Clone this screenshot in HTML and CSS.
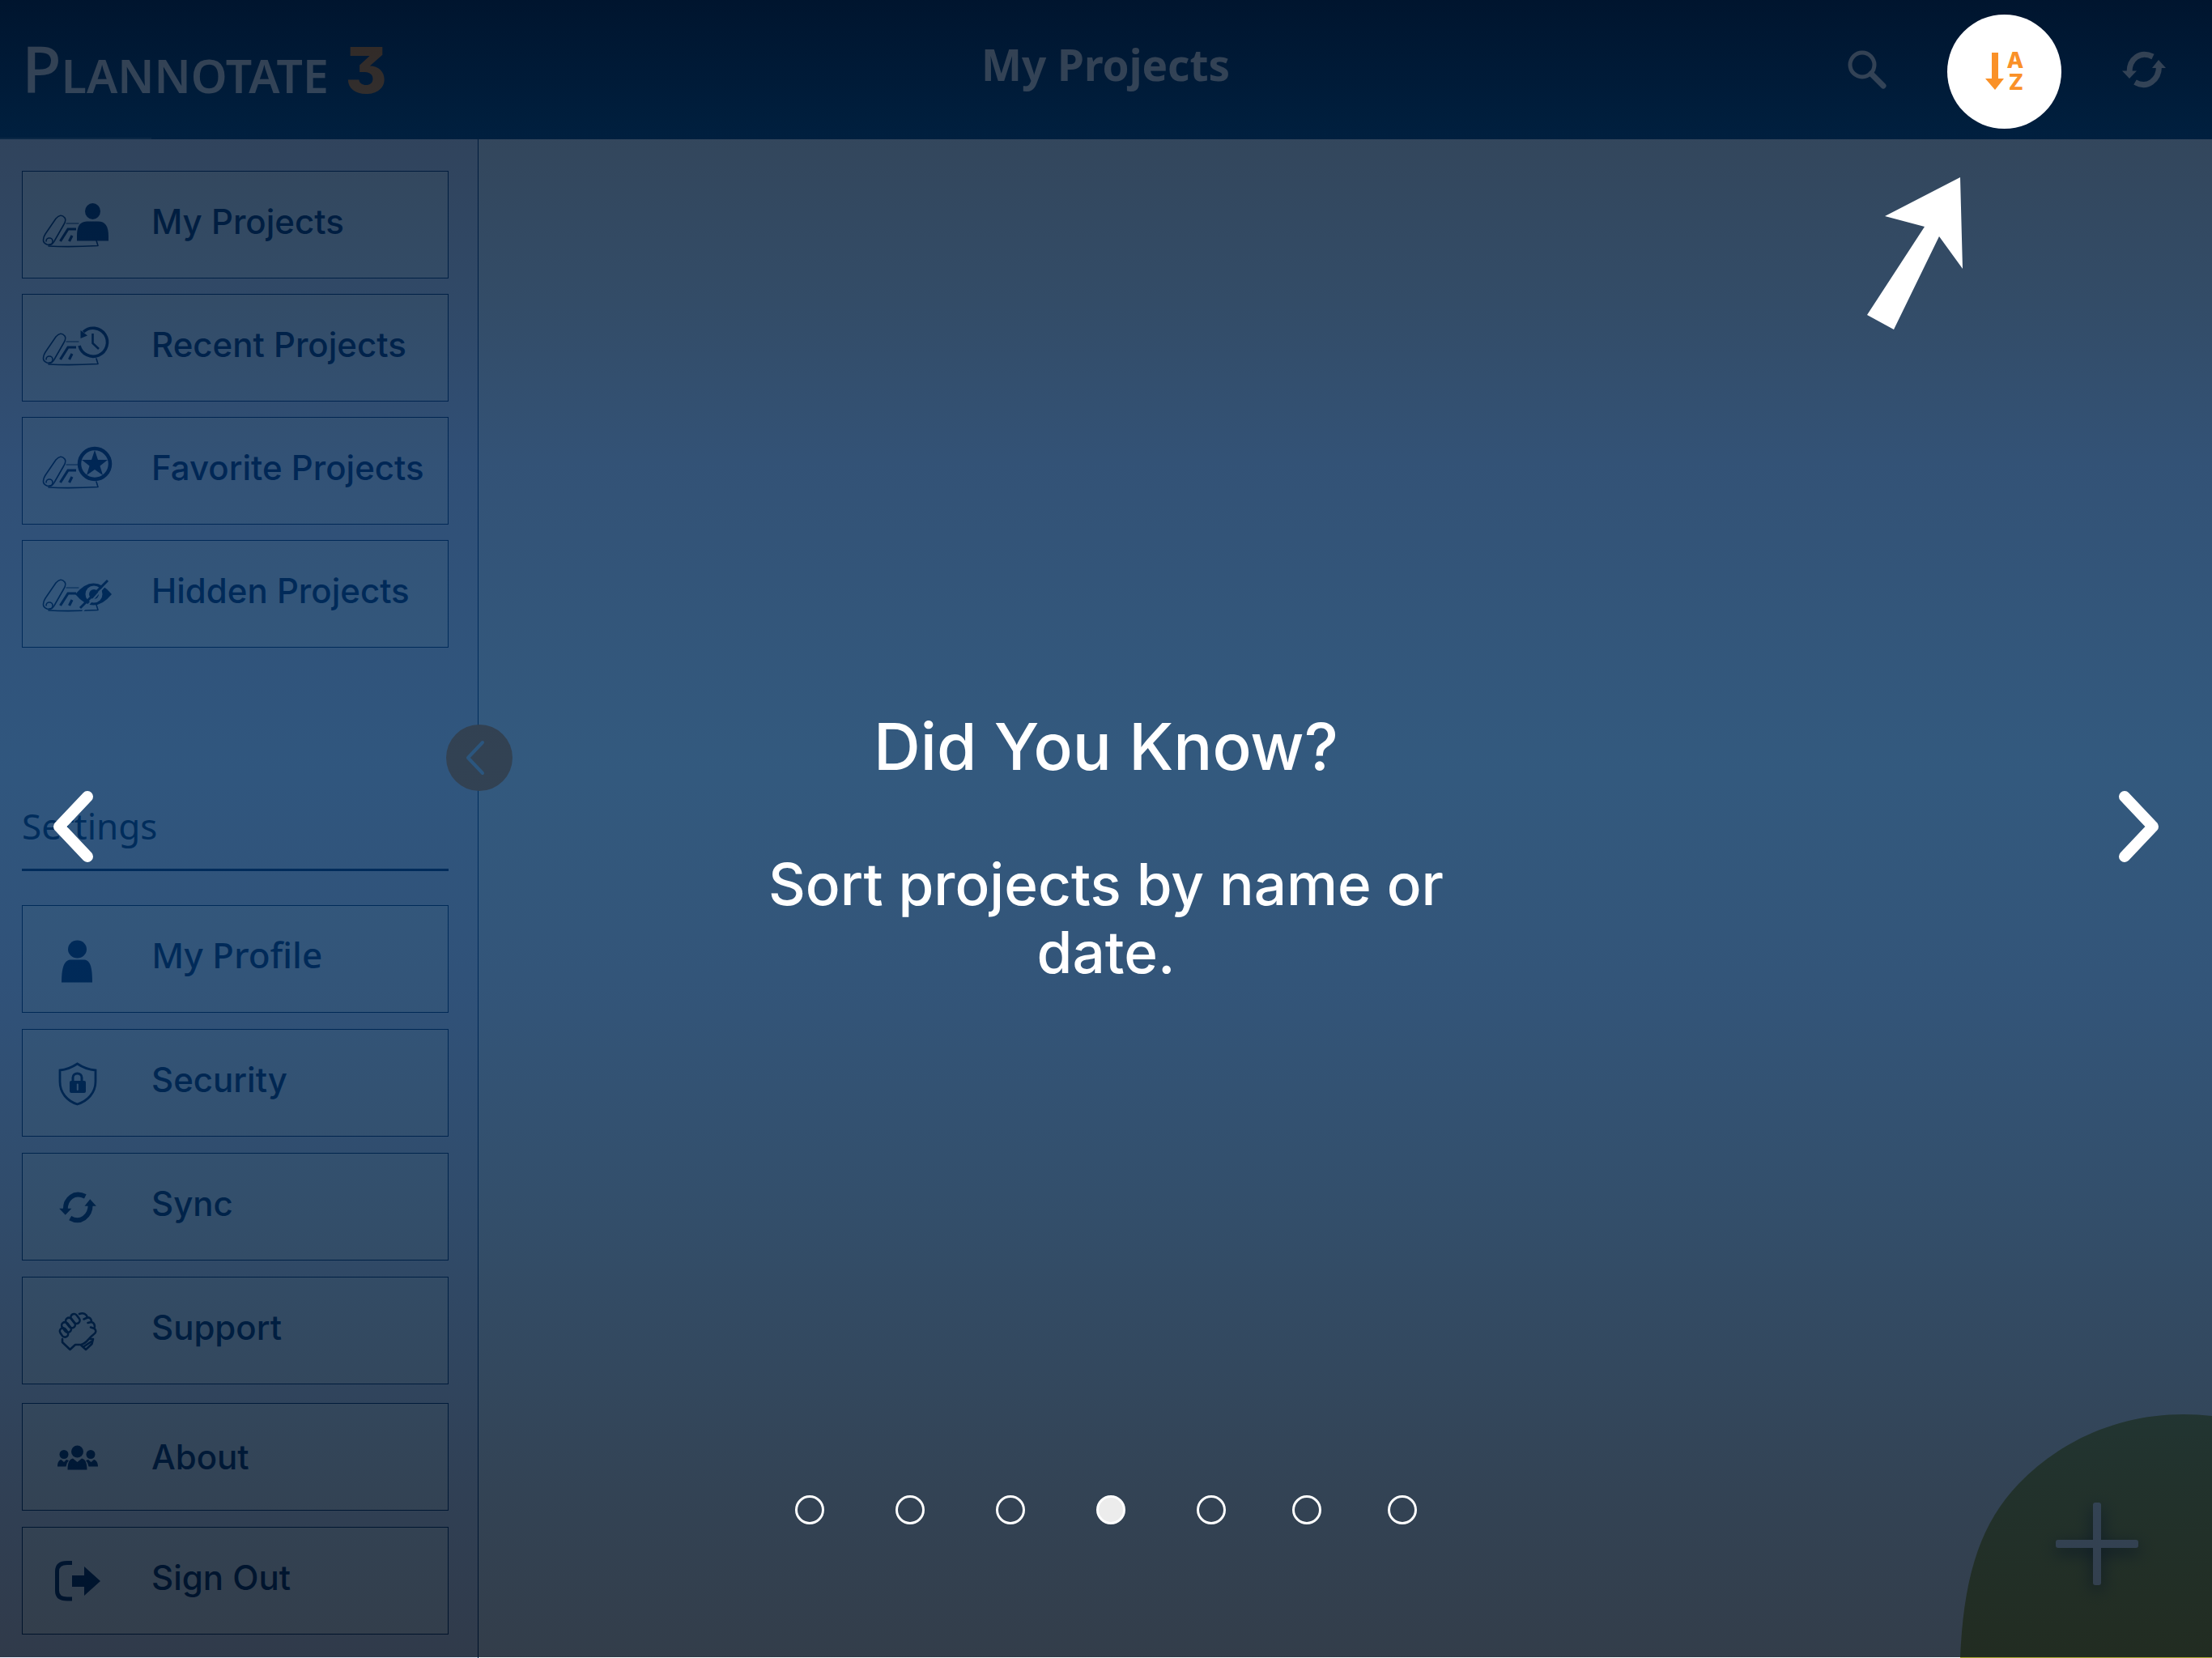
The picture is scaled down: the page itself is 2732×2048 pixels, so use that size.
FILE: index.html
```html
<!DOCTYPE html>
<html lang="en">
<head>
<meta charset="utf-8">
<meta name="viewport" content="width=device-width, initial-scale=1">
<title>Plannotate 3 – My Projects</title>
<link rel="stylesheet" href="styles.css">
</head>
<body>
<svg class="sprite" aria-hidden="true">
  <symbol id="scroll" viewBox="0 0 96 60" overflow="visible">
    <g fill="none" stroke="currentColor" stroke-width="1.6" stroke-linejoin="round" stroke-linecap="round">
      <path d="M6.500 48 Q7 44 9 41 L22 22 Q28 15 33 21 Q35 24 32 29 L20 50 Q17 56 11 54 Q6 52 6.500 48Z"/>
      <path d="M10 50 a4 4 0 1 1 4 4"/>
      <path d="M13 56 Q40 57.500 74 55.500 L72 49"/>
      <path d="M35 28 H50 M31 31 L23 45" stroke-width="1"/>
    </g>
    <path d="M27.500 50 L37 35 H47 M38.500 50 L42 43" fill="none" stroke="currentColor" stroke-width="3.200"/>
  </symbol>
  <symbol id="sync" viewBox="0 0 54 46">
    <g fill="none" stroke="currentColor" stroke-width="7">
      <path d="M9 26 C9 10 22 -1 38 7"/>
      <path d="M45.500 19 C45.500 36 31 47 16 38.500"/>
    </g>
    <path d="M0 24.500 H18 L9 34Z M37 21 H54 L45 11Z" fill="currentColor"/>
  </symbol>
</svg>

<div class="app">
  <header class="topbar">
    <div class="logo">P<span class="logo-small">lannotate</span> <span class="logo-version">3</span></div>
    <h1 class="topbar-title">My Projects</h1>
    <div class="topbar-actions">
      <button class="icon-button" type="button" aria-label="Search">
        <svg width="48" height="48" viewBox="0 0 48 48"><circle cx="18" cy="18" r="15" fill="none" stroke="currentColor" stroke-width="5"/><path d="M29 29 L44 44" stroke="currentColor" stroke-width="7" stroke-linecap="round"/></svg>
      </button>
      <button class="icon-button icon-button--spotlight" type="button" aria-label="Sort projects">
        <svg class="sort-icon" width="48" height="48" viewBox="0 0 48 48" fill="currentColor"><path d="M8 1 H16 V33 H23 L12 47 L0 33 H8Z"/><text class="sort-letter" x="37" y="20" text-anchor="middle">A</text><text class="sort-letter" x="38" y="47" text-anchor="middle">Z</text></svg>
      </button>
      <button class="icon-button" type="button" aria-label="Sync">
        <svg width="54" height="46"><use href="#sync"/></svg>
      </button>
    </div>
  </header>

  <div class="workspace">
    <nav class="sidebar" aria-label="Projects and settings">
      <div class="menu menu--projects">
        <button class="menu-item" type="button">
          <svg class="menu-icon" viewBox="0 0 96 60"><use href="#scroll"/><g fill="currentColor"><ellipse cx="67.500" cy="13" rx="9.500" ry="10"/><path d="M48 49.500 V44 C48 30 52 25.500 62 25.500 H74 C83 25.500 87 31 87 44 V49.500Z"/></g></svg>
          <span class="menu-label">My Projects</span>
        </button>
        <button class="menu-item" type="button">
          <svg class="menu-icon" viewBox="0 0 96 60"><use href="#scroll" y="-6"/><path class="knockout" d="M50 26 A18 18 0 1 0 58 8Z"/><path d="M51 27 A17.500 17.500 0 1 0 56 10" fill="none" stroke="currentColor" stroke-width="3.600"/><path d="M52.500 8 V18 L61 14.500Z" fill="currentColor"/><path d="M67.500 12 V24 L75 31" fill="none" stroke="currentColor" stroke-width="2.600"/></svg>
          <span class="menu-label">Recent Projects</span>
        </button>
        <button class="menu-item" type="button">
          <svg class="menu-icon" viewBox="0 0 96 60"><use href="#scroll" y="-6"/><circle class="knockout" cx="70" cy="21" r="19"/><circle cx="70" cy="21" r="19" fill="none" stroke="currentColor" stroke-width="4.500"/><path d="M70 4 L74 16 H86 L76.500 23.500 L80 35 L70 28 L60 35 L63.500 23.500 L54 16 H66Z" fill="currentColor"/></svg>
          <span class="menu-label">Favorite Projects</span>
        </button>
        <button class="menu-item" type="button">
          <svg class="menu-icon" viewBox="0 0 96 60"><use href="#scroll" y="-6"/><path d="M46 30 Q68.500 3 91 30 Q68.500 57 46 30Z" fill="currentColor"/><circle class="knockout" cx="69" cy="30" r="10.500"/><circle cx="69" cy="30" r="6" fill="currentColor"/><path d="M84 18 L55 51" class="knockout-line"/><path d="M86 13 L52 47" stroke="currentColor" stroke-width="3"/></svg>
          <span class="menu-label">Hidden Projects</span>
        </button>
      </div>

      <h2 class="sidebar-heading">Settings</h2>

      <div class="menu">
        <button class="menu-item menu-item--profile" type="button">
          <svg class="menu-icon" viewBox="0 0 96 60" fill="currentColor"><ellipse cx="48.500" cy="17.500" rx="11.500" ry="11"/><path d="M29 58.500 C29 38 33 30.500 41 30.500 H56 C64 30.500 67 38 67 58.500Z"/></svg>
          <span class="menu-label">My Profile</span>
        </button>
        <button class="menu-item" type="button">
          <svg class="menu-icon" viewBox="0 0 96 60" fill="none" stroke="currentColor"><path d="M48.500 6 Q59 13 71 14 V28 C71 42 61 52 48.500 56 C36 52 27 42 27 28 V14 Q38 13 48.500 6Z" stroke-width="2.800"/><path d="M43 28 V23 a5.500 5 0 0 1 11 0 V28" stroke-width="3"/><rect x="39" y="27" width="20" height="15" rx="2" fill="currentColor" stroke="none"/><path class="knockout-line" d="M48.800 31.500 V38" stroke-linecap="round"/></svg>
          <span class="menu-label">Security</span>
        </button>
        <button class="menu-item" type="button">
          <svg class="menu-icon" viewBox="0 0 96 60"><use href="#sync" x="26" y="11" width="46" height="39"/></svg>
          <span class="menu-label">Sync</span>
        </button>
        <button class="menu-item" type="button">
          <svg class="menu-icon" viewBox="0 0 96 60" fill="none" stroke="currentColor" stroke-width="2.600" stroke-linejoin="round" stroke-linecap="round"><rect x="-4" y="-6.500" width="8" height="13" rx="4" transform="translate(46 15) rotate(-38)"/><rect x="-4" y="-7" width="8" height="14" rx="4" transform="translate(40 20) rotate(-38)"/><rect x="-4" y="-7" width="8" height="14" rx="4" transform="translate(35 25.500) rotate(-38)"/><rect x="-4" y="-6" width="8" height="12" rx="4" transform="translate(32 32) rotate(-34)"/><path d="M30 40 V44 L39.500 53 L46 47 H53 C60 46 62 39 69 34 C72 32 72 29 69.500 27 C71 23 69 20 66 19 C66 15 64 13 61 13.500 C60 9 56 7 51 9"/><path d="M69.500 27 L65 25.500 M66 19 L61.500 20 M61 13.500 L56.500 15.500"/><path d="M53.500 48 L59 53 L66.500 46 L68 40 L64.500 40 M66 43 L57 49"/></svg>
          <span class="menu-label">Support</span>
        </button>
      </div>

      <div class="menu menu--account">
        <button class="menu-item menu-item--centered" type="button">
          <svg class="menu-icon" viewBox="0 0 96 60" fill="currentColor"><ellipse cx="48.500" cy="23" rx="7.500" ry="7.500"/><ellipse cx="32" cy="26.500" rx="5.500" ry="5.500"/><ellipse cx="65" cy="26.500" rx="5.500" ry="5.500"/><path d="M36.500 45.500 C36.500 36 39 32.500 43 31.500 L48.500 36 L54 31.500 C58 32.500 60.500 36 60.500 45.500Z"/><path d="M24 41.500 C24 36 26 33.500 28.500 33 L32 36 L35 33 L38 34 Q35 37 34.500 41.500Z M74 41.500 C74 36 71.500 33.500 69 33 L65.500 36 L62 33 L59 34 Q62 37 62.500 41.500Z"/></svg>
          <span class="menu-label">About</span>
        </button>
        <button class="menu-item" type="button">
          <svg class="menu-icon" viewBox="0 0 96 60"><path d="M42 7.500 H36 Q23.500 7.500 23.500 18 V42 Q23.500 52 36 52 H42" fill="none" stroke="currentColor" stroke-width="5"/><path d="M42 23 H57 V12 L77 30 L57 48 V37 H42Z" fill="currentColor"/></svg>
          <span class="menu-label">Sign Out</span>
        </button>
      </div>

      <button class="collapse" type="button" aria-label="Collapse sidebar">
        <svg width="82" height="82" viewBox="0 0 82 82"><path d="M45 22 L27 41 L45 60" fill="none" stroke="currentColor" stroke-width="4" stroke-linecap="round" stroke-linejoin="round"/></svg>
      </button>
    </nav>

    <main class="content">
      <button class="add-project" type="button" aria-label="Add project">
        <svg width="311" height="301" viewBox="0 0 311 301"><path class="add-shape" d="M0 301 C4 200 25 135 72 86 C124 32 196 0 276 0 Q294 0 311 2 V301Z"/><g class="add-plus"><rect x="164" y="109" width="10" height="102" rx="3"/><rect x="118" y="155" width="102" height="10" rx="3"/></g></svg>
      </button>
    </main>
  </div>

  <section class="tour" role="dialog" aria-labelledby="tour-title">
    <svg class="tour-pointer" width="118" height="189" viewBox="0 0 118 189"><path d="M115 0 L22 48 L71 61 L0 170 L33 188 L89 73 L118 113Z" fill="currentColor"/></svg>
    <button class="tour-step" type="button" aria-label="Previous tip">
      <svg width="50" height="88" viewBox="0 0 50 88"><path d="M43 7 L8 44 L43 81" fill="none" stroke="currentColor" stroke-width="14" stroke-linecap="round" stroke-linejoin="round"/></svg>
    </button>
    <div class="tour-text">
      <h2 class="tour-title" id="tour-title">Did You Know?</h2>
      <p class="tour-body">Sort projects by name or date.</p>
    </div>
    <button class="tour-step" type="button" aria-label="Next tip">
      <svg width="50" height="88" viewBox="0 0 50 88"><path d="M7 7 L42 44 L7 81" fill="none" stroke="currentColor" stroke-width="14" stroke-linecap="round" stroke-linejoin="round"/></svg>
    </button>
    <div class="tour-dots">
      <button class="dot" type="button" aria-label="Tip 1"></button>
      <button class="dot" type="button" aria-label="Tip 2"></button>
      <button class="dot" type="button" aria-label="Tip 3"></button>
      <button class="dot dot--current" type="button" aria-label="Tip 4" aria-current="step"></button>
      <button class="dot" type="button" aria-label="Tip 5"></button>
      <button class="dot" type="button" aria-label="Tip 6"></button>
      <button class="dot" type="button" aria-label="Tip 7"></button>
    </div>
  </section>
</div>
</body>
</html>
```
FILE: styles.css
```css
:root {
  --navy: #00265a;
  --orange: #fa9128;
  --green: #a9a832;
  --ui: Inter, "Liberation Sans", sans-serif;
  --brand: "Noto Sans", "Open Sans", sans-serif;
}

* {
  box-sizing: border-box;
}

body {
  margin: 0;
  background: #fff;
  font-family: var(--ui);
}

button {
  margin: 0;
  padding: 0;
  border: 0;
  background: none;
  color: inherit;
  font: inherit;
  cursor: pointer;
}

svg {
  display: block;
}

.sprite {
  position: absolute;
  width: 0;
  height: 0;
}

.app {
  position: relative;
  display: flex;
  flex-direction: column;
  min-height: 100vh;
}

/* Top bar */
.topbar {
  display: grid;
  grid-template-columns: 1fr auto 1fr;
  align-items: center;
  height: 172px;
  padding: 0 57px 0 27px;
  background:
    linear-gradient(#fff3, #fff3) left bottom / 187px 2px no-repeat,
    linear-gradient(#003060, #003c6c);
  color: #fff;
  font-family: var(--brand);
}

.logo {
  padding-top: 4px;
  font-size: 80px;
  line-height: 100px;
  font-weight: 500;
  white-space: nowrap;
}

.logo-small {
  font-size: 57px;
  font-weight: 600;
  text-transform: uppercase;
}

.logo-version {
  color: var(--orange);
  font-family: var(--ui);
  font-size: 78px;
  font-weight: 800;
  font-feature-settings: "cv09";
}

.topbar-title {
  margin: 0;
  padding: 0 0 12px 29px;
  font-size: 53px;
  line-height: 72px;
  font-weight: 700;
}

.topbar-actions {
  display: flex;
  align-items: center;
  justify-content: flex-end;
  gap: 75px;
}

.icon-button--spotlight {
  position: relative;
  z-index: 3;
  display: grid;
  place-items: center;
  width: 141px;
  height: 141px;
  margin-top: 4px;
  border-radius: 50%;
  background: #fff;
  color: var(--orange);
}

.sort-icon {
  overflow: visible;
}

.sort-letter {
  font-family: var(--ui);
  font-size: 27px;
  font-weight: 800;
}

/* Sidebar */
.workspace {
  display: flex;
  flex: 1;
}

.sidebar {
  position: relative;
  flex: none;
  width: 591px;
  padding: 39px 36px 28px 27px;
  border-right: 1px solid var(--navy);
  background: #f0f0ff;
  color: var(--navy);
}

.menu {
  display: flex;
  flex-direction: column;
  gap: 20px;
}

.menu--projects {
  gap: 19px;
}

.menu--account {
  margin-top: 23px;
}

.menu-item {
  display: flex;
  align-items: center;
  gap: 44px;
  width: 100%;
  height: 133px;
  padding-left: 19px;
  border: 1px solid var(--navy);
  background: #fff;
  font-size: 42px;
  font-weight: 500;
  line-height: 50px;
  text-align: left;
}

.menu-icon {
  flex: none;
  width: 96px;
  height: 60px;
  overflow: visible;
}

.menu-label {
  padding-bottom: 8px;
  white-space: nowrap;
}

.menu-item--centered .menu-label {
  padding-bottom: 0;
}

.menu-item--profile {
  font-family: var(--brand);
  font-size: 44px;
}

.menu-item--profile .menu-label {
  padding-bottom: 12px;
}

.knockout {
  fill: #fff;
}

.knockout-line {
  stroke: #fff;
  stroke-width: 2px;
}

.sidebar-heading {
  margin: 190px 0 42px;
  padding-bottom: 23px;
  border-bottom: 3px solid var(--navy);
  font-family: var(--brand);
  font-size: 44px;
  line-height: 60px;
  font-weight: 400;
}

.collapse {
  position: absolute;
  top: 723px;
  right: -43px;
  border-radius: 50%;
  background: #fa8a28;
  color: #d8eeff;
}

/* Project area */
.content {
  position: relative;
  flex: 1;
}

.add-project {
  position: absolute;
  right: 0;
  bottom: 0;
}

.add-shape {
  fill: var(--green);
}

.add-plus {
  fill: #fff;
  filter: drop-shadow(0 6px 10px #002a);
}

/* Tour overlay */
.tour {
  position: absolute;
  inset: 0 0 1px;
  z-index: 2;
  display: flex;
  align-items: center;
  justify-content: space-between;
  padding: 0 65px 6px;
  background: linear-gradient(
    rgb(0 14 34 / 80%),
    rgb(0 24 51 / 80%) 8%,
    rgb(0 31 65 / 80%) 18%,
    rgb(0 39 84 / 80%) 28%,
    rgb(0 48 94 / 80%) 46%,
    rgb(0 42 87 / 80%) 60%,
    rgb(0 35 71 / 80%) 72%,
    rgb(0 20 42 / 80%) 90%,
    rgb(0 13 29 / 80%)
  );
  color: #fff;
}

.tour-pointer {
  position: absolute;
  top: 219px;
  right: 308px;
}

.tour-text {
  max-width: 900px;
  padding-top: 50px;
  text-align: center;
}

.tour-title {
  margin: 0 0 80px;
  font-size: 80px;
  line-height: 96px;
  font-weight: 500;
}

.tour-body {
  margin: 0;
  font-size: 71px;
  line-height: 84px;
  font-weight: 500;
}

.tour-dots {
  position: absolute;
  right: 0;
  bottom: 164px;
  left: 0;
  display: flex;
  justify-content: center;
  gap: 88px;
}

.dot {
  width: 36px;
  height: 36px;
  border: 3px solid #fff;
  border-radius: 50%;
}

.dot:nth-child(n + 6) {
  margin-left: -6px;
}

.dot--current {
  background: #ececec;
}
```
